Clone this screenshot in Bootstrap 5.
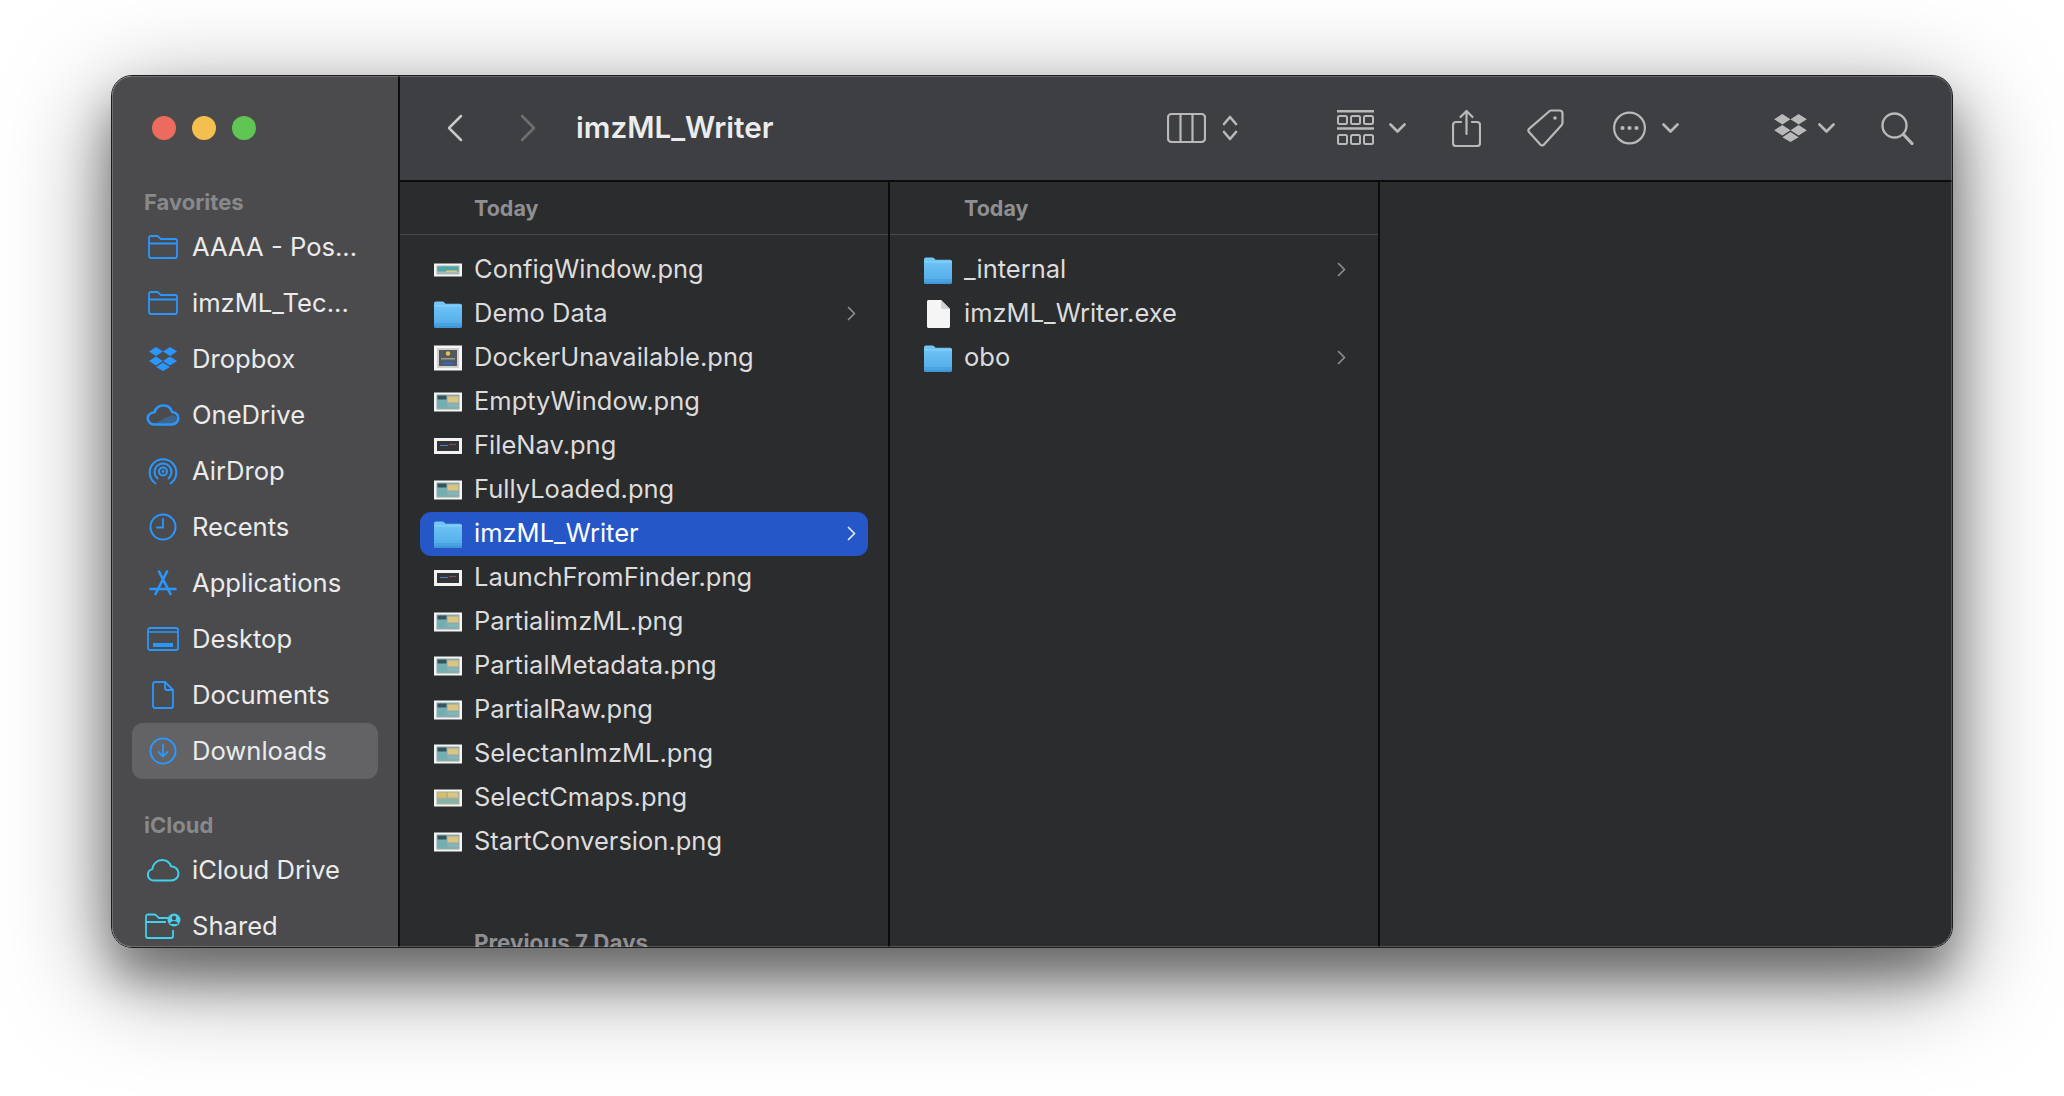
<!DOCTYPE html>
<html lang="en">
<head>
  <meta charset="UTF-8" />
  <meta name="viewport" content="width=device-width, initial-scale=1.0">
  <title>imzML_Writer</title>
  <link href="https://cdn.jsdelivr.net/npm/bootstrap@5.3.3/dist/css/bootstrap.min.css" rel="stylesheet" />
  <style>
    html, body { height: 100%; }
    body {
      background: #fff;
      font-family: Inter, "Liberation Sans", sans-serif;
      overflow: hidden;
      padding: 75px 0 0 111px;
    }

    .finder-win {
      position: relative;
      width: 1842px;
      height: 873px;
      border: 1px solid #1c1c1e;
      border-radius: 21px;
      overflow: hidden;
      box-shadow: 0 28px 100px rgba(0, 0, 0, .5), 0 30px 45px rgba(0, 0, 0, .33);
    }
    .finder-win::after {
      content: "";
      position: absolute;
      inset: 0;
      border: 1px solid rgba(255, 255, 255, .2);
      border-radius: 20px;
      pointer-events: none;
    }

    /* sidebar */
    .side { width: 286px; background: #4b4b4e; flex: none; border-right: 2px solid #0c0c0d; box-sizing: content-box; }
    .side > * { flex: none; }
    .lights { padding: 40px 0 0 40px; gap: 16px; margin-bottom: 45px; }
    .light { width: 24px; height: 24px; border-radius: 50%; }
    .light-r { background: #ec6a5e; }
    .light-y { background: #f4bf4f; }
    .light-g { background: #61c554; }
    .side-label {
      height: 34px;
      line-height: 34px;
      padding-left: 32px;
      font-size: 22px;
      font-weight: 700;
      color: #88898b;
    }
    .side-label-2 { margin-top: 29px; }
    .side-row {
      height: 56px;
      margin: 0 20px;
      width: 246px;
      padding-left: 11px;
      border-radius: 11px;
      font-size: 25.6px;
      color: #ebebeb;
      white-space: nowrap;
    }
    .side-row.on { background: #636366; }
    .side-ico { width: 40px; height: 36px; margin-right: 9px; flex: none; color: #2b97fd; }
    .side-ico.cy { color: #42d0ee; }

    /* toolbar */
    .main-pane { background: #2b2c2e; min-width: 0; }
    .toolbar {
      height: 106px;
      flex: none;
      background: #3e3f42;
      border-bottom: 2px solid #0c0c0d;
      padding: 0 38px 0 47px;
      color: #b9b9ba;
    }
    .tb-title { font-size: 29.6px; font-weight: 600; color: #ececec; margin-left: 40px; padding-bottom: 2px; flex-grow: 1; }
    .tb-forward { margin-left: 57px; color: #6e6f71; }
    .gap-11 { margin-left: 11px; }
    .gap-15 { margin-left: 15px; }
    .gap-46 { margin-left: 46px; }
    .gap-49 { margin-left: 49px; }
    .gap-95 { margin-left: 95px; }
    .gap-99 { margin-left: 99px; }

    /* columns */
    .col-pane { width: 490px; flex: none; border-right: 2px solid #0c0c0d; overflow: hidden; }
    .col-head {
      height: 53px;
      line-height: 52px;
      border-bottom: 1px solid #4a4b4d;
      padding-left: 74px;
      font-size: 21.5px;
      font-weight: 700;
      color: #8f8f91;
      margin-bottom: 13px;
    }
    .file-row {
      height: 44px;
      margin: 0 20px;
      width: 448px;
      padding: 0 12px 0 14px;
      border-radius: 11px;
      font-size: 25.5px;
      color: #dcdcdd;
      white-space: nowrap;
    }
    .file-row.on { background: #2557c9; color: #fff; }
    .file-ico { width: 28px; height: 28px; margin-right: 12px; flex: none; }
    .file-name { flex-grow: 1; padding-bottom: 1px; }
    .row-chev { width: 9px; height: 15px; margin-right: 0; margin-bottom: 2px; color: #8c8d8f; }
    .file-row.on .row-chev { color: #e6ecfa; }
    .prev-head {
      margin-top: 52px;
      padding-left: 74px;
      font-size: 22.4px;
      font-weight: 700;
      color: #8f8f91;
      line-height: 54px;
    }
  </style>
</head>
<body>
  <svg width="0" height="0" class="d-block">
    <defs>
      <linearGradient id="folderFill" x1="0" y1="0" x2="0" y2="1">
        <stop offset="0" stop-color="#74c8f8" />
        <stop offset="1" stop-color="#4fa9e8" />
      </linearGradient>
      <symbol id="folderBlue" viewBox="0 0 28 28">
        <path d="M0 3.600C0 2.400.8 1.500 2 1.500h6.200c1 0 1.700.4 2.400 1.200l1 1.100H26c1.200 0 2 .8 2 2V26c0 1.200-.8 2-2 2H2c-1.200 0-2-.8-2-2z" fill="url(#folderFill)" />
        <rect x="0" y="5.400" width="28" height="1" fill="#8fd4fa" />
        <path d="M0 23.500h28V26c0 1.200-.8 2-2 2H2c-1.200 0-2-.8-2-2z" fill="#3f97d8" />
        <rect x="0" y="24.600" width="28" height=".8" fill="#62b4ec" />
      </symbol>
      <symbol id="folderLine" viewBox="0 0 30 24">
        <path d="M1 8V3a2 2 0 0 1 2-2h5.500c1 0 1.700.4 2.500 1.100L12.800 4H27a2 2 0 0 1 2 2v15a2 2 0 0 1-2 2H3a2 2 0 0 1-2-2zM1 8.500h28" fill="none" stroke="currentColor" stroke-width="1.800" />
      </symbol>
      <symbol id="dropMark" viewBox="0 0 28 24">
        <path d="M7 0l7 4.500L7 9 0 4.500zM21 0l7 4.500L21 9l-7-4.500zM7 9.500l7 4.500-7 4.500L0 14zM21 9.500l7 4.500-7 4.500L14 14zM14 15.500l7 4.500-7 4-7-4z" fill="currentColor" />
      </symbol>
      <symbol id="chevDown" viewBox="0 0 17 10">
        <path d="M1.500 1.500L8.500 8.500L15.500 1.500" fill="none" stroke="currentColor" stroke-width="2.600" stroke-linecap="round" stroke-linejoin="round" />
      </symbol>
      <symbol id="chevRight" viewBox="0 0 9 15">
        <path d="M1.500 1.500L7.500 7.500L1.500 13.500" fill="none" stroke="currentColor" stroke-width="1.700" stroke-linecap="round" stroke-linejoin="round" />
      </symbol>
      <symbol id="thConfig" viewBox="0 0 28 28">
        <rect y="7.500" width="28" height="13" fill="#f4f4f4" />
        <rect x="2.500" y="9.500" width="23" height="9" fill="#a9b6b6" />
        <rect x="3.500" y="10.500" width="21" height="5" fill="#4fa5a8" />
        <rect x="12" y="14.500" width="11" height="1.500" fill="#d9c77e" />
      </symbol>
      <symbol id="thApp" viewBox="0 0 28 28">
        <rect y="4.500" width="28" height="19" fill="#f4f4f4" />
        <rect x="2.500" y="6.500" width="23" height="15" fill="#8fa9aa" />
        <rect x="3.500" y="7.500" width="9" height="4" fill="#31565f" />
        <rect x="13.500" y="8.500" width="11" height="6" fill="#dcc482" />
        <rect x="3.500" y="12.500" width="9" height="7" fill="#6eb0b4" />
        <rect x="14" y="16" width="10" height="3" fill="#7fb8bb" />
      </symbol>
      <symbol id="thCmap" viewBox="0 0 28 28">
        <rect y="5.500" width="28" height="17" fill="#f4f4f4" />
        <rect x="2.500" y="7.500" width="23" height="13" fill="#a7b08f" />
        <rect x="3.500" y="8.500" width="9" height="5" fill="#d8bd6e" />
        <rect x="14" y="8.500" width="10" height="5" fill="#dcc482" />
        <rect x="3.500" y="15" width="21" height="4" fill="#84b3ac" />
      </symbol>
      <symbol id="thDocker" viewBox="0 0 28 28">
        <rect y="1.500" width="28" height="25" fill="#f6f6f6" />
        <rect x="3" y="4" width="22" height="20" fill="#cfcfcf" />
        <rect x="5" y="6" width="18" height="16" fill="#55585d" />
        <circle cx="14" cy="9.500" r="2.200" fill="#e6c350" />
        <rect x="7" y="14" width="14" height="1.500" fill="#9a9ca0" />
        <rect x="9" y="18.500" width="10" height="2" fill="#2c6bd0" />
      </symbol>
      <symbol id="thDark" viewBox="0 0 28 28">
        <rect y="6" width="28" height="16" fill="#f2f2f2" />
        <rect x="3" y="9" width="22" height="10" fill="#333437" />
        <rect x="6" y="13" width="8" height="1" fill="#4a7fd0" />
        <rect x="15" y="12" width="7" height="1" fill="#8a4b4b" />
      </symbol>
      <symbol id="fileBlank" viewBox="0 0 28 28">
        <path d="M3 1.500C3 .7 3.700 0 4.500 0H17l9 9v17.500c0 .8-.7 1.500-1.500 1.500h-20c-.8 0-1.500-.7-1.500-1.500z" fill="#f5f5f5" />
        <path d="M17 0l9 9h-7.500C17.700 9 17 8.300 17 7.500z" fill="#d2d2d2" />
      </symbol>
    </defs>
  </svg>

  <div class="finder-win d-flex">
    <!-- Sidebar -->
    <div class="side d-flex flex-column">
      <div class="lights d-flex">
        <span class="light light-r"></span>
        <span class="light light-y"></span>
        <span class="light light-g"></span>
      </div>
      <div class="side-label">Favorites</div>
      <div class="side-row d-flex align-items-center"><span class="side-ico d-flex align-items-center justify-content-center"><svg width="30" height="24"><use href="#folderLine" /></svg></span>AAAA - Pos...</div>
      <div class="side-row d-flex align-items-center"><span class="side-ico d-flex align-items-center justify-content-center"><svg width="30" height="24"><use href="#folderLine" /></svg></span>imzML_Tec...</div>
      <div class="side-row d-flex align-items-center"><span class="side-ico d-flex align-items-center justify-content-center"><svg width="28" height="24"><use href="#dropMark" /></svg></span>Dropbox</div>
      <div class="side-row d-flex align-items-center">
        <span class="side-ico d-flex align-items-center justify-content-center">
          <svg width="34" height="22" viewBox="0 0 34 22"><path d="M8 20.500h17.500c3.600 0 6.800-2.600 6.800-6.200 0-3.400-2.700-6-6.200-6.300C25 4 21.500 1.500 17.500 1.500 13 1.500 9.600 4.300 8.500 8.200 4.500 8.500 1.800 11 1.800 14.300c0 3.400 2.800 6.200 6.200 6.200z" fill="none" stroke="currentColor" stroke-width="2.500" /><path d="M9 19.500l10-5.500 8-3 5 3.500c-1 3.500-3.500 5-6.500 5z" fill="currentColor" opacity=".35" /></svg>
        </span>OneDrive
      </div>
      <div class="side-row d-flex align-items-center">
        <span class="side-ico d-flex align-items-center justify-content-center">
          <svg width="30" height="28" viewBox="0 0 30 28" fill="none" stroke="currentColor" stroke-width="2" stroke-linecap="round"><path d="M7.500 26.500a13.300 13.300 0 1 1 15 0" /><path d="M9.500 21.500a8.500 8.500 0 1 1 11 0" /><circle cx="15" cy="14.500" r="4" /><circle cx="15" cy="14.500" r="1.400" fill="currentColor" stroke="none" /></svg>
        </span>AirDrop
      </div>
      <div class="side-row d-flex align-items-center">
        <span class="side-ico d-flex align-items-center justify-content-center">
          <svg width="28" height="28" viewBox="0 0 28 28" fill="none" stroke="currentColor" stroke-width="2"><circle cx="14" cy="14" r="12.500" /><path d="M14 6v8.500H8" stroke-width="1.800" stroke-linecap="round" /></svg>
        </span>Recents
      </div>
      <div class="side-row d-flex align-items-center">
        <span class="side-ico d-flex align-items-center justify-content-center">
          <svg width="28" height="26" viewBox="0 0 28 26" fill="none" stroke="currentColor" stroke-width="2.600" stroke-linecap="round"><path d="M10 1.500l11.500 22.500" /><path d="M18 1.500L6.500 24" /><path d="M1.500 19h25" /></svg>
        </span>Applications
      </div>
      <div class="side-row d-flex align-items-center">
        <span class="side-ico d-flex align-items-center justify-content-center">
          <svg width="32" height="24" viewBox="0 0 32 24"><rect x="1" y="1" width="30" height="22" rx="2" fill="none" stroke="currentColor" stroke-width="1.800" /><path d="M1 5h30" stroke="currentColor" stroke-width="1.500" /><rect x="6" y="16" width="20" height="4" fill="currentColor" /></svg>
        </span>Desktop
      </div>
      <div class="side-row d-flex align-items-center">
        <span class="side-ico d-flex align-items-center justify-content-center">
          <svg width="24" height="28" viewBox="0 0 24 28" fill="none" stroke="currentColor" stroke-width="1.800" stroke-linejoin="round"><path d="M2 3a2 2 0 0 1 2-2h10l8 8v16a2 2 0 0 1-2 2H4a2 2 0 0 1-2-2z" /><path d="M14 1v6a2 2 0 0 0 2 2h6" /></svg>
        </span>Documents
      </div>
      <div class="side-row on d-flex align-items-center">
        <span class="side-ico d-flex align-items-center justify-content-center">
          <svg width="28" height="28" viewBox="0 0 28 28" fill="none" stroke="currentColor" stroke-width="2" stroke-linecap="round" stroke-linejoin="round"><circle cx="14" cy="14" r="12.500" /><path d="M14 7.500v12M9.500 15l4.500 4.500 4.500-4.500" stroke-width="1.800" /></svg>
        </span>Downloads
      </div>
      <div class="side-label side-label-2">iCloud</div>
      <div class="side-row d-flex align-items-center">
        <span class="side-ico cy d-flex align-items-center justify-content-center">
          <svg width="34" height="24" viewBox="0 0 34 24"><path d="M7.500 22.500a5.800 5.800 0 0 1-1.300-11.400C7 6 11 2 16 2c4.300 0 7.600 2.500 9 6.200 4.500.2 7.500 3.500 7.500 7.300 0 4-3.100 7-7.500 7z" fill="none" stroke="currentColor" stroke-width="2" /></svg>
        </span>iCloud Drive
      </div>
      <div class="side-row d-flex align-items-center">
        <span class="side-ico cy d-flex align-items-center justify-content-center">
          <svg width="36" height="28" viewBox="0 0 36 28"><path d="M1 9V4.500a2 2 0 0 1 2-2h6c1 0 1.700.4 2.500 1.100L14 6h9M1 9v15a2 2 0 0 0 2 2h23a2 2 0 0 0 2-2v-6M1 10h20" fill="none" stroke="currentColor" stroke-width="1.800" /><circle cx="29" cy="8" r="6.500" fill="currentColor" /><circle cx="29" cy="6" r="2.200" fill="#4b4b4e" /><path d="M24.800 12c.7-2 2.300-3 4.200-3s3.500 1 4.200 3z" fill="#4b4b4e" /></svg>
        </span>Shared
      </div>
    </div>

    <!-- Toolbar and columns -->
    <div class="main-pane flex-grow-1 d-flex flex-column">
      <div class="toolbar d-flex align-items-center">
        <svg width="16" height="28" viewBox="0 0 16 28"><path d="M14 2L2 14l12 12" fill="none" stroke="#c8c8c9" stroke-width="2.500" stroke-linecap="round" stroke-linejoin="round" /></svg>
        <svg class="tb-forward" width="16" height="28" viewBox="0 0 16 28"><path d="M2 2l12 12L2 26" fill="none" stroke="currentColor" stroke-width="2.500" stroke-linecap="round" stroke-linejoin="round" /></svg>
        <div class="tb-title">imzML_Writer</div>

        <svg width="39" height="30" viewBox="0 0 39 30" fill="none" stroke="currentColor" stroke-width="2.200"><rect x="1" y="1" width="37" height="28" rx="3.500" /><path d="M13.500 1v28M25.500 1v28" /></svg>
        <svg class="ms-3" width="16" height="26" viewBox="0 0 16 26" fill="none" stroke="currentColor" stroke-width="2.600" stroke-linecap="round" stroke-linejoin="round"><path d="M2 9l6-7 6 7M2 17l6 7 6-7" /></svg>

        <svg class="gap-99" width="37" height="36" viewBox="0 0 37 36" fill="none" stroke="currentColor" stroke-width="2"><path d="M0 1.200h37M0 18.500h37" stroke-width="2.400" /><rect x="1" y="6" width="9" height="8" rx="1.500" /><rect x="14" y="6" width="9" height="8" rx="1.500" /><rect x="27" y="6" width="9" height="8" rx="1.500" /><rect x="1" y="25" width="9" height="9" rx="1.500" /><rect x="14" y="25" width="9" height="9" rx="1.500" /><rect x="27" y="25" width="9" height="9" rx="1.500" /></svg>
        <svg class="gap-15" width="17" height="10"><use href="#chevDown" /></svg>

        <svg class="gap-46" width="29" height="38" viewBox="0 0 29 38" fill="none" stroke="currentColor" stroke-width="2.200" stroke-linecap="round" stroke-linejoin="round"><path d="M9 13H4a3 3 0 0 0-3 3v18a3 3 0 0 0 3 3h21a3 3 0 0 0 3-3V16a3 3 0 0 0-3-3h-5" /><path d="M14.500 25V2M8.500 8l6-6 6 6" /></svg>

        <svg class="gap-46" width="37" height="38" viewBox="0 0 37 38" fill="none" stroke="currentColor" stroke-width="2.200" stroke-linejoin="round"><path d="M24 1.500h8.500a3 3 0 0 1 3 3v9c0 1-.3 1.800-1 2.700L17 35.500c-1 1.200-2.500 1.300-3.500.2L2 23c-.8-1-.8-2.200 0-3.200L21.500 3c.8-1 1.500-1.500 2.500-1.500z" /><circle cx="28" cy="9" r="1.800" fill="currentColor" stroke="none" /></svg>

        <svg class="gap-49" width="33" height="34" viewBox="0 0 33 34" fill="none" stroke="currentColor" stroke-width="2.200"><circle cx="16.500" cy="17" r="15.400" /><circle cx="9.500" cy="17" r="2.100" fill="currentColor" stroke="none" /><circle cx="16.500" cy="17" r="2.100" fill="currentColor" stroke="none" /><circle cx="23.500" cy="17" r="2.100" fill="currentColor" stroke="none" /></svg>
        <svg class="ms-3" width="17" height="10"><use href="#chevDown" /></svg>

        <svg class="gap-95" width="33" height="28"><use href="#dropMark" /></svg>
        <svg class="gap-11" width="17" height="10"><use href="#chevDown" /></svg>

        <svg class="gap-46" width="33" height="33" viewBox="0 0 33 33" fill="none" stroke="currentColor" stroke-width="2.400" stroke-linecap="round"><circle cx="13.500" cy="13.500" r="12" /><path d="M22.500 22.500L31 31.500" stroke-width="3.200" /></svg>
      </div>

      <div class="d-flex flex-grow-1 overflow-hidden">
        <div class="col-pane">
          <div class="col-head">Today</div>
          <div class="file-row d-flex align-items-center"><svg class="file-ico"><use href="#thConfig" /></svg><span class="file-name">ConfigWindow.png</span></div>
          <div class="file-row d-flex align-items-center"><svg class="file-ico"><use href="#folderBlue" /></svg><span class="file-name">Demo Data</span><svg class="row-chev"><use href="#chevRight" /></svg></div>
          <div class="file-row d-flex align-items-center"><svg class="file-ico"><use href="#thDocker" /></svg><span class="file-name">DockerUnavailable.png</span></div>
          <div class="file-row d-flex align-items-center"><svg class="file-ico"><use href="#thApp" /></svg><span class="file-name">EmptyWindow.png</span></div>
          <div class="file-row d-flex align-items-center"><svg class="file-ico"><use href="#thDark" /></svg><span class="file-name">FileNav.png</span></div>
          <div class="file-row d-flex align-items-center"><svg class="file-ico"><use href="#thApp" /></svg><span class="file-name">FullyLoaded.png</span></div>
          <div class="file-row on d-flex align-items-center"><svg class="file-ico"><use href="#folderBlue" /></svg><span class="file-name">imzML_Writer</span><svg class="row-chev"><use href="#chevRight" /></svg></div>
          <div class="file-row d-flex align-items-center"><svg class="file-ico"><use href="#thDark" /></svg><span class="file-name">LaunchFromFinder.png</span></div>
          <div class="file-row d-flex align-items-center"><svg class="file-ico"><use href="#thApp" /></svg><span class="file-name">PartialimzML.png</span></div>
          <div class="file-row d-flex align-items-center"><svg class="file-ico"><use href="#thApp" /></svg><span class="file-name">PartialMetadata.png</span></div>
          <div class="file-row d-flex align-items-center"><svg class="file-ico"><use href="#thApp" /></svg><span class="file-name">PartialRaw.png</span></div>
          <div class="file-row d-flex align-items-center"><svg class="file-ico"><use href="#thApp" /></svg><span class="file-name">SelectanImzML.png</span></div>
          <div class="file-row d-flex align-items-center"><svg class="file-ico"><use href="#thCmap" /></svg><span class="file-name">SelectCmaps.png</span></div>
          <div class="file-row d-flex align-items-center"><svg class="file-ico"><use href="#thApp" /></svg><span class="file-name">StartConversion.png</span></div>
          <div class="prev-head">Previous 7 Days</div>
        </div>
        <div class="col-pane">
          <div class="col-head">Today</div>
          <div class="file-row d-flex align-items-center"><svg class="file-ico"><use href="#folderBlue" /></svg><span class="file-name">_internal</span><svg class="row-chev"><use href="#chevRight" /></svg></div>
          <div class="file-row d-flex align-items-center"><svg class="file-ico"><use href="#fileBlank" /></svg><span class="file-name">imzML_Writer.exe</span></div>
          <div class="file-row d-flex align-items-center"><svg class="file-ico"><use href="#folderBlue" /></svg><span class="file-name">obo</span><svg class="row-chev"><use href="#chevRight" /></svg></div>
        </div>
        <div class="flex-grow-1"></div>
      </div>
    </div>
  </div>

  <script src="https://cdn.jsdelivr.net/npm/bootstrap@5.3.3/dist/js/bootstrap.bundle.min.js"></script>
</body>
</html>
